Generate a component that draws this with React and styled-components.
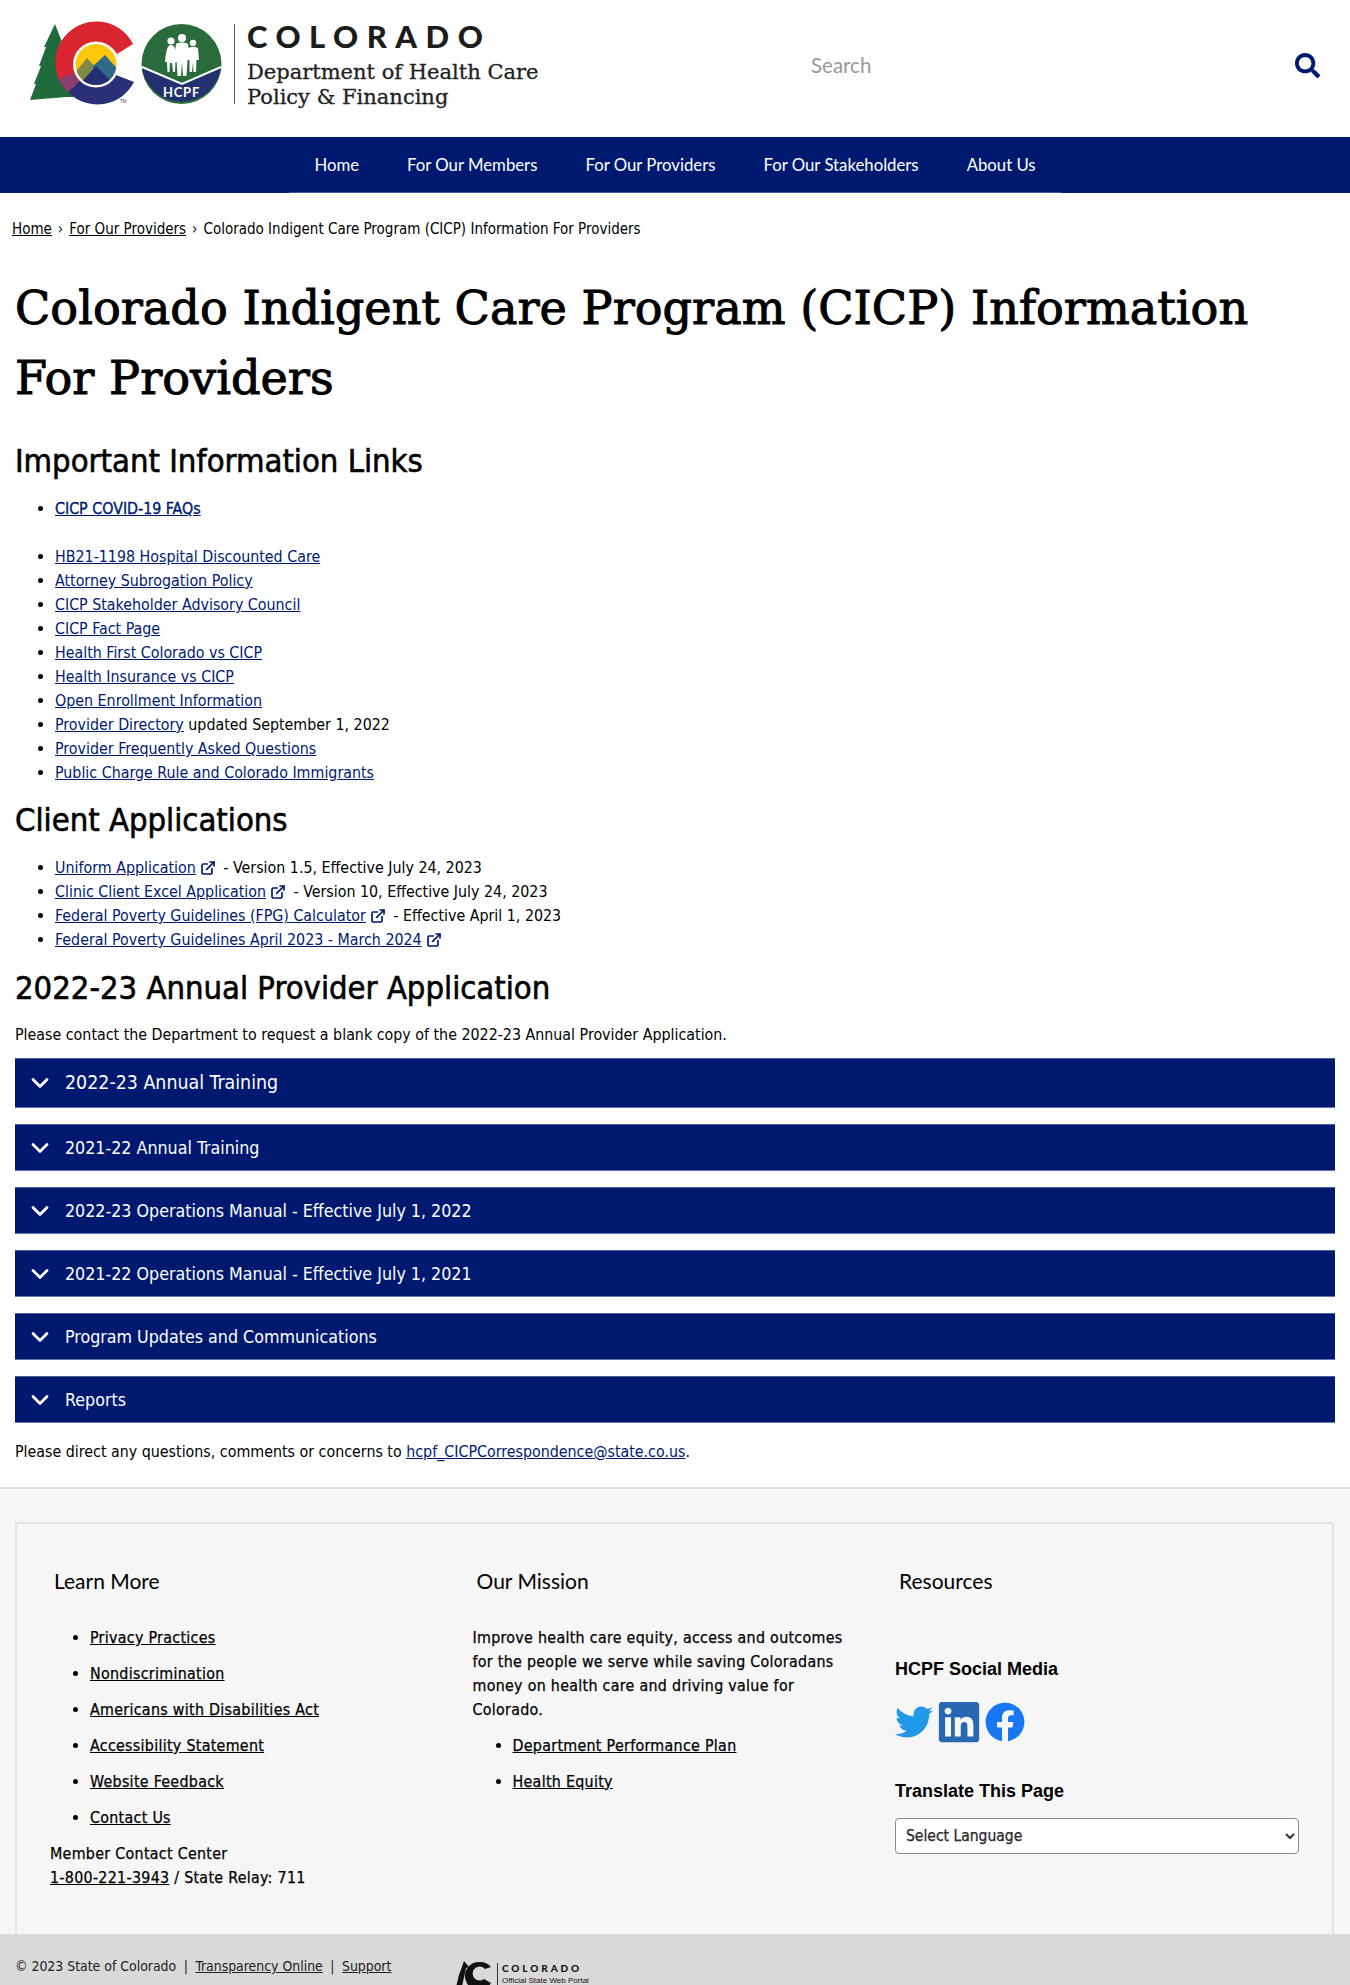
import React from 'react';
import styled, { createGlobalStyle } from 'styled-components';
import { ChevronDown, ExternalLink } from 'lucide-react';
import { FaSearch, FaTwitter, FaLinkedin, FaFacebook } from 'react-icons/fa';

const NAVY = '#001970';
const BODY = '"DejaVu Sans Condensed", "DejaVu Sans", sans-serif';

const Global = createGlobalStyle`
  html, body {
    margin: 0;
    padding: 0;
    overflow: hidden;
    background: #fff;
  }
  #root {
    height: 1985px;
    overflow: hidden;
  }
  body {
    font-family: ${BODY};
    font-stretch: condensed;
    font-size: 15.85px;
    line-height: 24px;
    color: #000;
  }
`;

const Header = styled.header`
  display: flex;
  align-items: flex-start;
  height: 137px;
`;

const LogoMark = styled.svg`
  flex: none;
  display: block;
`;

const LogoText = styled.div`
  margin-left: 12px;
  width: 540px;
`;

const StateName = styled.div`
  font-family: "Lato", sans-serif;
  font-weight: 900;
  font-size: 31px;
  line-height: 26px;
  margin-top: 23px;
  letter-spacing: 8.5px;
  color: #1c1c1c;
`;

const DeptName = styled.div`
  font-family: "DejaVu Serif", serif;
  font-stretch: normal;
  font-size: 21px;
  line-height: 25px;
  margin-top: 11px;
  color: #222;
  -webkit-text-stroke: 0.3px #222;
`;

const SearchBox = styled.div`
  flex: 1;
  display: flex;
  align-items: center;
  justify-content: space-between;
  height: 130px;
  padding: 0 30px 0 24px;
  color: #999;
  font-family: "Lato", sans-serif;
  font-size: 20.5px;

  svg {
    color: ${NAVY};
    font-size: 25px;
  }
`;

const Nav = styled.nav`
  height: 56px;
  background: ${NAVY};
  display: flex;
  justify-content: center;
`;

const NavList = styled.div`
  display: flex;
  align-items: center;
  gap: 48px;
  padding: 0 25px;
  color: #fff;
  font-family: "Lato", sans-serif;
  font-size: 16.75px;
  box-shadow: inset 0 -1px 0 #3d5a9e;
`;

const Breadcrumb = styled.div`
  padding: 24px 12px 0;
  font-size: 15px;
  line-height: 24px;

  a {
    color: #000;
    text-decoration: underline;
  }
  span {
    margin: 0 6px;
  }
`;

const Main = styled.main`
  padding: 0 15px;
`;

const Title = styled.h1`
  font-family: "DejaVu Serif", serif;
  font-stretch: normal;
  font-weight: 400;
  font-size: 46.2px;
  line-height: 70px;
  margin: 32px 0 0;
  -webkit-text-stroke: 1px #000;
`;

const SectionTitle = styled.h2`
  font-size: 32.5px;
  line-height: 48px;
  font-weight: 400;
  margin: ${(p) => p.$top}px 0 0;
  -webkit-text-stroke: 0.6px #000;
`;

const Links = styled.ul`
  margin: ${(p) => p.$top || 0}px 0 0;
  padding: 0 0 0 40px;

  a {
    color: ${NAVY};
    text-decoration: underline;
  }
`;

const Lead = styled.a`
  -webkit-text-stroke: 0.35px ${NAVY};
`;

const ExtIcon = styled(ExternalLink)`
  color: ${NAVY};
  margin: 0 3px 0 4px;
  vertical-align: -3px;
`;

const Note = styled.p`
  margin: ${(p) => p.$top}px 0 0;
`;

const MailLink = styled.a`
  color: ${NAVY};
  text-decoration: underline;
`;

const Accordion = styled.div`
  margin-top: 11px;
  display: flex;
  flex-direction: column;
  gap: 16px;
`;

const Panel = styled.div`
  height: ${(p) => (p.$tall ? 50 : 47)}px;
  box-sizing: border-box;
  background: ${NAVY};
  border-top: 1px solid #4a5f9c;
  border-bottom: 1px solid #6277ae;
  display: flex;
  align-items: center;
  padding-left: 11px;
  gap: 11px;
  color: #fff;
  font-size: ${(p) => (p.$tall ? 19.4 : 17.7)}px;

  svg {
    flex: none;
  }
`;

const Footer = styled.footer`
  margin-top: 23px;
  background: #f6f6f6;
  border-top: 2px solid #dedede;
  padding-top: 33px;
`;

const FooterBox = styled.div`
  margin: 0 16px 0 15px;
  height: 412px;
  box-sizing: border-box;
  border: 2px solid #e4e4e4;
  border-bottom: 0;
  padding: 43px 0 0 33px;
  display: grid;
  grid-template-columns: repeat(3, 422.5px);
`;

const FooterCol = styled.div`
  letter-spacing: 0.3px;
  -webkit-text-stroke: 0.25px #000;
`;

const ColTitle = styled.h3`
  font-family: "Lato", sans-serif;
  font-weight: 400;
  font-size: 21px;
  line-height: 28px;
  letter-spacing: 0;
  margin: 0 0 31px 4px;
  -webkit-text-stroke: 0;
`;

const FootLinks = styled.ul`
  margin: 0;
  padding: 0 0 0 40px;

  li {
    margin-bottom: 12px;
  }
  a {
    color: #000;
    text-decoration: underline;
  }
`;

const Mission = styled.p`
  margin: 0 0 12px;
  width: 380px;
`;

const Contact = styled.div`
  a {
    color: #000;
    text-decoration: underline;
  }
`;

const ArialTitle = styled.div`
  font-family: "Liberation Sans", Arial, sans-serif;
  font-stretch: normal;
  font-weight: 700;
  font-size: 18px;
  line-height: 24px;
  letter-spacing: 0;
  -webkit-text-stroke: 0;
  margin-top: ${(p) => p.$top}px;
`;

const Social = styled.div`
  display: flex;
  gap: 6px;
  margin-top: 21px;
  height: 40px;
  align-items: center;
`;

const LinkedIn = styled(FaLinkedin)`
  margin: 0 -3px;
`;

const LangSelect = styled.select`
  display: block;
  margin-top: 15px;
  width: 404px;
  height: 36px;
  box-sizing: border-box;
  border: 1.5px solid #8a8a8a;
  border-radius: 4px;
  background: #fff;
  padding: 0 6px;
  font-family: ${BODY};
  font-stretch: condensed;
  font-size: 15.5px;
  color: #333;
`;

const BottomBar = styled.div`
  height: 90px;
  background: #d9d9d9;
  padding-top: 20px;
  padding-left: 15px;
  display: flex;
  align-items: flex-start;
  font-size: 13.9px;
  color: #222;

  a {
    color: #222;
    text-decoration: underline;
  }
  i {
    font-style: normal;
    margin: 0 7.5px;
  }
`;

const Copy = styled.div`
  width: 440px;
`;

const PortalMark = styled.svg`
  flex: none;
  margin-top: 7px;
`;

const Portal = styled.div`
  margin: 9px 0 0 4px;
  border-left: 1px solid #333;
  padding-left: 4px;
`;

const PortalName = styled.div`
  font-family: "Lato", sans-serif;
  font-weight: 900;
  font-size: 10px;
  line-height: 10px;
  letter-spacing: 2.9px;
  color: #111;
`;

const PortalSub = styled.div`
  font-family: "Liberation Sans", sans-serif;
  font-stretch: normal;
  font-size: 8px;
  line-height: 10px;
  margin-top: 3px;
  color: #111;
`;

const StateLogo = () => (
  <LogoMark width="235" height="137" viewBox="0 0 235 137">
    <defs>
      <clipPath id="sun">
        <circle cx="96" cy="64.5" r="20.5" />
      </clipPath>
    </defs>
    <path
      fill="#1f6b3b"
      d="M55 24 L62 42 L60 42 L67 58 L64 58 L70 78 L66 78 L78 97 L66 97 L30 100 L36 84 L34 84 L41 66 L39 66 L46 47 L44 47 Z"
    />
    <path fill="#d9252f" d="M133 44 A41 41 0 1 0 68 92 L81 79 A22 22 0 1 1 117 54 Z" />
    <path fill="#2b2f78" d="M68 92 A41 41 0 0 0 134 82 L116 75 A22 22 0 0 1 81 79 Z" />
    <path fill="#8b3d6e" d="M59 79 A41 41 0 0 0 68 92 L81 79 A22 22 0 0 1 76 72 Z" />
    <circle cx="96" cy="64.5" r="23" fill="#fff" />
    <g clipPath="url(#sun)">
      <rect x="74" y="43" width="44" height="44" fill="#fdc70c" />
      <path fill="#7e8a45" d="M72 76 L87 58 L102 74 L84 88 Z" />
      <path fill="#2d6a8a" d="M92 67 L105 55 L120 72 L108 84 Z" />
      <path fill="#232f72" d="M76 88 L96 66 L118 88 Z" />
    </g>
    <text x="120" y="103" fontSize="4.5" fontFamily="Liberation Sans, sans-serif" fill="#444">
      TM
    </text>
    <circle cx="181.5" cy="64" r="40" fill="#2a6b3c" />
    <path fill="#24316f" d="M142 68 L182 84 L221 68 A40 40 0 0 1 142 68 Z" />
    <path fill="none" stroke="#fff" strokeWidth="2" d="M142 67 L182 84 L221 67" />
    <g fill="#fff">
      <circle cx="171" cy="41" r="3.6" />
      <path d="M171 45 C175 45 176 50 178 62 L175.5 62 L175 72 L173 72 L172 63 L170 63 L169.5 72 L167.5 72 L167 62 L165 62 C166 52 167 45 171 45 Z" />
      <circle cx="182" cy="38" r="4" />
      <path d="M176 44 C178 42 186 42 188 44 L190 60 L187.5 60 L186.5 76 L183 76 L182 62 L181 76 L177.5 76 L176.5 60 L174 60 Z" />
      <circle cx="193" cy="43" r="3.2" />
      <path d="M188 48 C190 46.5 196 46.5 198 48 L199 60 L196.5 60 L196 72 L193.5 72 L193 62 L192 72 L189.5 72 L189.5 60 L187 60 Z" />
    </g>
    <text
      x="181.5"
      y="97"
      textAnchor="middle"
      fontSize="13"
      fontWeight="700"
      letterSpacing="0.8"
      fontFamily="Lato, sans-serif"
      fill="#fff"
    >
      HCPF
    </text>
    <rect x="234" y="24" width="1" height="80" fill="#555" />
  </LogoMark>
);

const App = () => (
  <>
    <Global />
    <Header>
      <StateLogo />
      <LogoText>
        <StateName>COLORADO</StateName>
        <DeptName>
          Department of Health Care
          <br />
          Policy &amp; Financing
        </DeptName>
      </LogoText>
      <SearchBox>
        <span>Search</span>
        <FaSearch />
      </SearchBox>
    </Header>
    <Nav>
      <NavList>
        <span>Home</span>
        <span>For Our Members</span>
        <span>For Our Providers</span>
        <span>For Our Stakeholders</span>
        <span>About Us</span>
      </NavList>
    </Nav>
    <Breadcrumb>
      <a href="#">Home</a>
      <span>›</span>
      <a href="#">For Our Providers</a>
      <span>›</span>
      Colorado Indigent Care Program (CICP) Information For Providers
    </Breadcrumb>
    <Main>
      <Title>Colorado Indigent Care Program (CICP) Information For Providers</Title>
      <SectionTitle $top={24}>Important Information Links</SectionTitle>
      <Links $top={12}>
        <li>
          <Lead href="#">CICP COVID-19 FAQs</Lead>
        </li>
      </Links>
      <Links $top={24}>
        {[
          'HB21-1198 Hospital Discounted Care',
          'Attorney Subrogation Policy',
          'CICP Stakeholder Advisory Council',
          'CICP Fact Page',
          'Health First Colorado vs CICP',
          'Health Insurance vs CICP',
          'Open Enrollment Information',
        ].map((t) => (
          <li key={t}>
            <a href="#">{t}</a>
          </li>
        ))}
        <li>
          <a href="#">Provider Directory</a> updated September 1, 2022
        </li>
        <li>
          <a href="#">Provider Frequently Asked Questions</a>
        </li>
        <li>
          <a href="#">Public Charge Rule and Colorado Immigrants</a>
        </li>
      </Links>
      <SectionTitle $top={11}>Client Applications</SectionTitle>
      <Links $top={12}>
        <li>
          <a href="#">Uniform Application</a>
          <ExtIcon size={16} strokeWidth={2.5} /> - Version 1.5, Effective July 24, 2023
        </li>
        <li>
          <a href="#">Clinic Client Excel Application</a>
          <ExtIcon size={16} strokeWidth={2.5} /> - Version 10, Effective July 24, 2023
        </li>
        <li>
          <a href="#">Federal Poverty Guidelines (FPG) Calculator</a>
          <ExtIcon size={16} strokeWidth={2.5} /> - Effective April 1, 2023
        </li>
        <li>
          <a href="#">Federal Poverty Guidelines April 2023 - March 2024</a>
          <ExtIcon size={16} strokeWidth={2.5} />
        </li>
      </Links>
      <SectionTitle $top={12}>2022-23 Annual Provider Application</SectionTitle>
      <Note $top={11}>
        Please contact the Department to request a blank copy of the 2022-23 Annual Provider Application.
      </Note>
      <Accordion>
        <Panel $tall>
          <ChevronDown size={28} strokeWidth={2.4} />
          2022-23 Annual Training
        </Panel>
        {[
          '2021-22 Annual Training',
          '2022-23 Operations Manual - Effective July 1, 2022',
          '2021-22 Operations Manual - Effective July 1, 2021',
          'Program Updates and Communications',
          'Reports',
        ].map((t) => (
          <Panel key={t}>
            <ChevronDown size={28} strokeWidth={2.4} />
            {t}
          </Panel>
        ))}
      </Accordion>
      <Note $top={17}>
        Please direct any questions, comments or concerns to{' '}
        <MailLink href="#">hcpf_CICPCorrespondence@state.co.us</MailLink>.
      </Note>
    </Main>
    <Footer>
      <FooterBox>
        <FooterCol>
          <ColTitle>Learn More</ColTitle>
          <FootLinks>
            {[
              'Privacy Practices',
              'Nondiscrimination',
              'Americans with Disabilities Act',
              'Accessibility Statement',
              'Website Feedback',
              'Contact Us',
            ].map((t) => (
              <li key={t}>
                <a href="#">{t}</a>
              </li>
            ))}
          </FootLinks>
          <Contact>
            Member Contact Center
            <br />
            <a href="#">1-800-221-3943</a> / State Relay: 711
          </Contact>
        </FooterCol>
        <FooterCol>
          <ColTitle>Our Mission</ColTitle>
          <Mission>
            Improve health care equity, access and outcomes for the people we serve while saving Coloradans money on
            health care and driving value for Colorado.
          </Mission>
          <FootLinks>
            <li>
              <a href="#">Department Performance Plan</a>
            </li>
            <li>
              <a href="#">Health Equity</a>
            </li>
          </FootLinks>
        </FooterCol>
        <FooterCol>
          <ColTitle>Resources</ColTitle>
          <ArialTitle $top={62}>HCPF Social Media</ArialTitle>
          <Social>
            <FaTwitter size={38} color="#2199e8" />
            <LinkedIn size={46} color="#2867b2" />
            <FaFacebook size={40} color="#1877f2" />
          </Social>
          <ArialTitle $top={37}>Translate This Page</ArialTitle>
          <LangSelect defaultValue="">
            <option value="">Select Language</option>
          </LangSelect>
        </FooterCol>
      </FooterBox>
      <BottomBar>
        <Copy>
          © 2023 State of Colorado<i>|</i>
          <a href="#">Transparency Online</a>
          <i>|</i>
          <a href="#">Support</a>
        </Copy>
        <PortalMark width="38" height="34" viewBox="0 0 38 34">
          <path d="M9 0 L14 6 L11 7 L6 30 L0 30 L4 14 Z" fill="#111" />
          <path d="M24 1 A14 14 0 1 0 36 22 L29 18 A7 7 0 1 1 30 8 L36 6 A14 14 0 0 0 24 1 Z" fill="#111" />
        </PortalMark>
        <Portal>
          <PortalName>COLORADO</PortalName>
          <PortalSub>Official State Web Portal</PortalSub>
        </Portal>
      </BottomBar>
    </Footer>
  </>
);

export default App;
